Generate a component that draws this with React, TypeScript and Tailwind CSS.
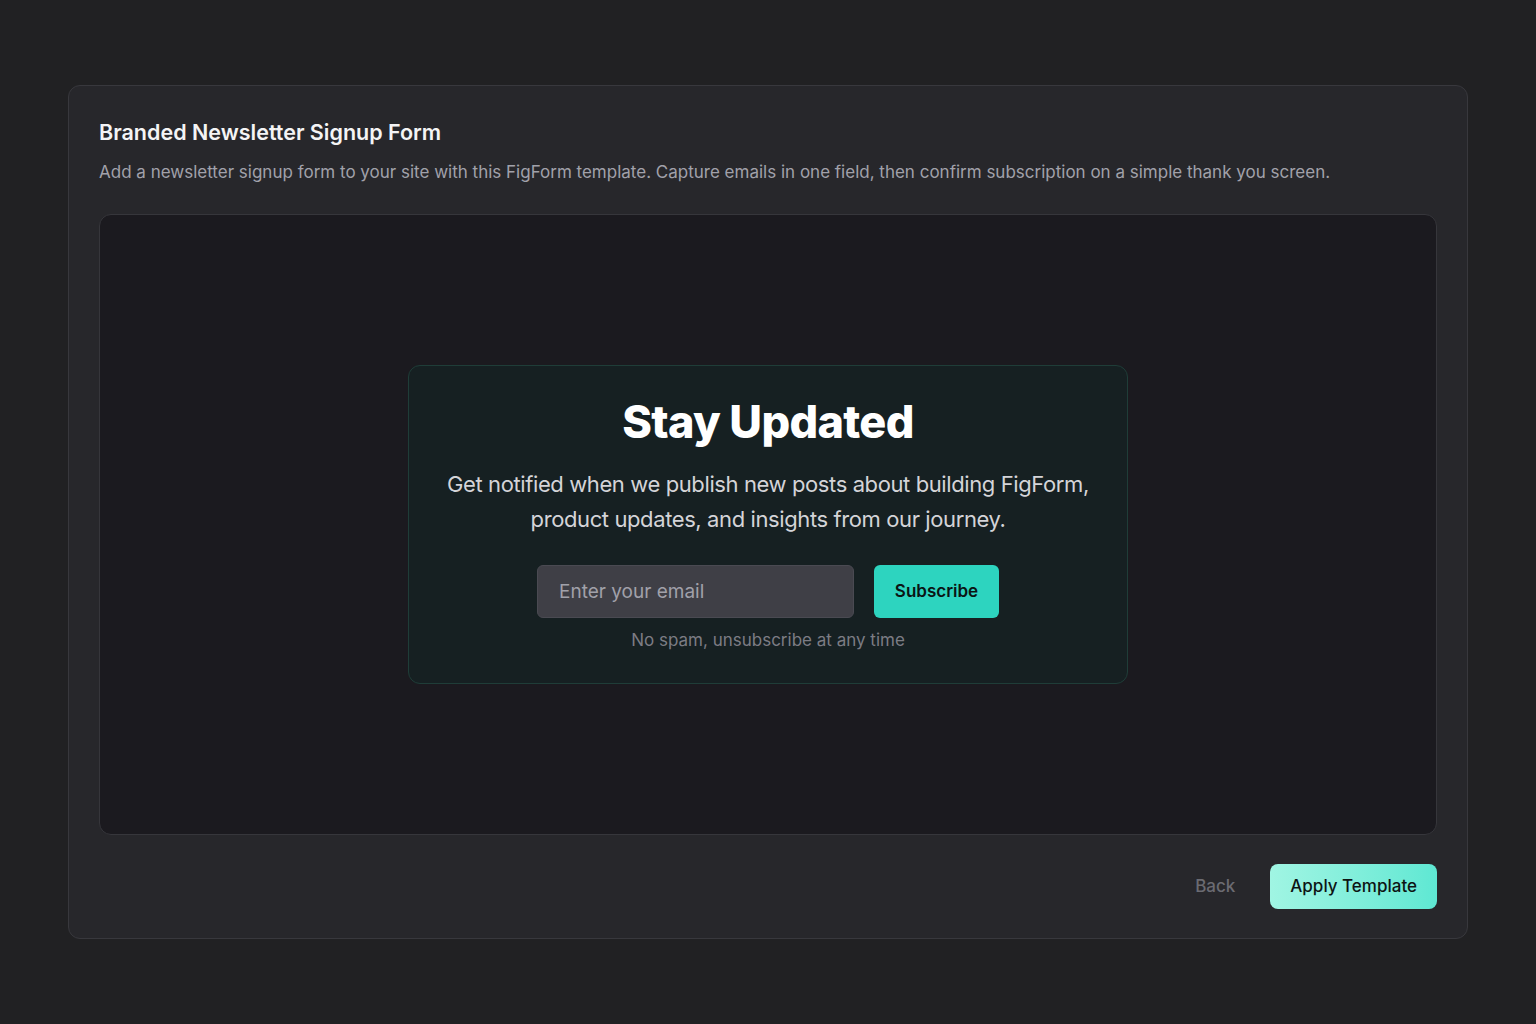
export default function App() {
  return (
    <div
      className="min-h-screen bg-[#212123] px-[68px] pt-[85px] pb-[85px]"
      style={{ fontFamily: 'Inter, "Noto Sans", sans-serif' }}
    >
      <div className="rounded-[12px] border border-[#38383d] bg-[#27272b] px-[30px] pt-[30px] pb-[29px]">
        <h1 className="text-[21.5px] font-semibold leading-[32px] text-[#f4f4f5]">
          Branded Newsletter Signup Form
        </h1>
        <p className="mt-[11px] text-[17px] leading-[26px] text-[#a1a1aa]">
          Add a newsletter signup form to your site with this FigForm template. Capture emails in one field, then
          confirm subscription on a simple thank you screen.
        </p>

        <div className="mt-[29px] flex h-[621px] items-center justify-center rounded-[12px] border border-[#36363b] bg-[#1b1a1f]">
          <div className="w-[720px] rounded-[12px] border border-[#1f3d38] bg-[#162022] px-[30px] pt-[29px] pb-[31px] text-center">
            <h2 className="text-[45px] font-extrabold leading-[54px] tracking-[-0.015em] text-white">
              Stay Updated
            </h2>
            <p className="mt-[18px] text-[22px] leading-[35px] tracking-[-0.018em] text-[#d4d4d8]">
              Get notified when we publish new posts about building FigForm, product updates, and insights from our
              journey.
            </p>
            <div className="mt-[28px] flex justify-center gap-[20px]">
              <input
                placeholder="Enter your email"
                className="h-[53px] w-[317px] rounded-[6px] border border-[#4a4a52] bg-[#3f3f46] px-[21px] text-[19px] text-white placeholder:text-[#a1a1aa] outline-none"
              />
              <button className="h-[53px] w-[125px] rounded-[6px] bg-[#2dd4bf] text-[17px] font-semibold text-[#0b1514]">
                Subscribe
              </button>
            </div>
            <p className="mt-[10px] text-[17px] leading-[24px] text-[#7c7c84]">No spam, unsubscribe at any time</p>
          </div>
        </div>

        <div className="mt-[29px] flex items-center justify-end gap-[35px]">
          <button className="text-[17px] font-medium text-[#6b6b72]">Back</button>
          <button className="h-[45px] rounded-[8px] bg-gradient-to-r from-[#a0f5e3] to-[#5ee8d3] px-[20px] text-[17px] font-medium text-[#0d1413]">
            Apply Template
          </button>
        </div>
      </div>
    </div>
  )
}
